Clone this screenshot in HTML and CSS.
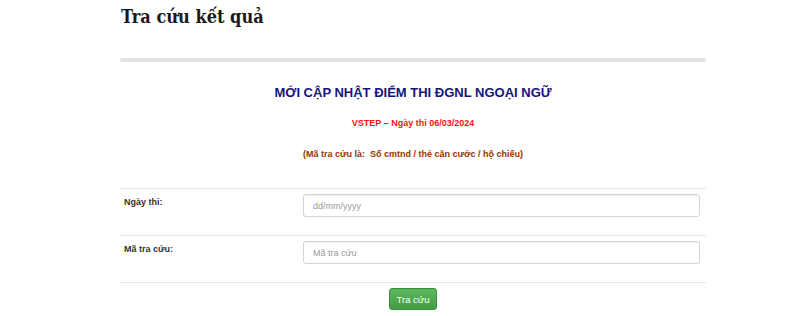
FILE: index.html
```html
<!DOCTYPE html>
<html lang="vi">
<head>
<meta charset="utf-8">
<title>Tra cứu kết quả</title>
<link rel="stylesheet" href="styles.css">
</head>
<body>
<div class="page">
  <h1 class="page-title">Tra cứu kết quả</h1>
  <div class="divider"></div>
  <div class="notice">
    <p class="notice-title">MỚI CẬP NHẬT ĐIỂM THI ĐGNL NGOẠI NGỮ</p>
    <p class="notice-date">VSTEP – Ngày thi 06/03/2024</p>
    <p class="notice-hint">(Mã tra cứu là:&nbsp; Số cmtnd / thẻ căn cước / hộ chiếu)</p>
  </div>
  <form class="lookup">
    <div class="row">
      <label class="row-label" for="date">Ngày thi:</label>
      <input class="row-input" id="date" type="text" placeholder="dd/mm/yyyy">
    </div>
    <div class="row">
      <label class="row-label" for="code">Mã tra cứu:</label>
      <input class="row-input" id="code" type="text" placeholder="Mã tra cứu">
    </div>
    <div class="actions">
      <button class="btn" type="button">Tra cứu</button>
    </div>
  </form>
</div>
</body>
</html>
```

FILE: styles.css
```css
* { box-sizing: border-box; }
html, body { margin: 0; padding: 0; background: #fff; }
body { font-family: "Liberation Sans", Arial, sans-serif; }

.page {
  width: 586px;
  margin-left: 120px;
}

.page-title {
  margin: 0;
  padding-top: 5px;
  padding-left: 1px;
  height: 58px;
  font-family: "DejaVu Serif Condensed", "DejaVu Serif", serif;
  font-stretch: condensed;
  font-weight: bold;
  font-size: 18px;
  line-height: 24px;
  color: #1a1a1a;
}

.divider {
  height: 4px;
  background: #e3e3e3;
  border-radius: 2px;
}

.notice {
  text-align: center;
  padding-top: 23px;
  height: 126px;
}
.notice p { margin: 0; font-weight: bold; }
.notice-title {
  font-size: 13px;
  line-height: 16px;
  color: #14147a;
}
.notice-date {
  margin-top: 16px !important;
  font-size: 9px;
  line-height: 12px;
  color: #f01414;
}
.notice-hint {
  margin-top: 19px !important;
  font-size: 9px;
  line-height: 12px;
  color: #993300;
}

.row {
  display: grid;
  grid-template-columns: 183px 397px;
  border-top: 1px solid #e8e8e8;
  height: 47px;
  padding-top: 5px;
}
.row-label {
  font-size: 9px;
  font-weight: bold;
  color: #333;
  padding-left: 4px;
  padding-top: 2px;
  line-height: 12px;
}
.row-input {
  height: 23px;
  border: 1px solid #d4d4d4;
  border-radius: 3px;
  padding: 0 9px;
  font-family: "Liberation Sans", Arial, sans-serif;
  font-size: 9px;
  color: #555;
  box-shadow: inset 0 1px 1px rgba(0,0,0,0.06);
}
.row-input::placeholder { color: #999; }

.actions {
  border-top: 1px solid #e8e8e8;
  display: flex;
  justify-content: center;
  padding-top: 5px;
}
.btn {
  width: 48px;
  height: 22px;
  border: 1px solid #3d8b3d;
  border-radius: 3px;
  background: linear-gradient(#5cb85c, #449d44);
  color: #fff;
  font-family: "Liberation Sans", Arial, sans-serif;
  font-size: 9.5px;
  padding: 0;
}
```
